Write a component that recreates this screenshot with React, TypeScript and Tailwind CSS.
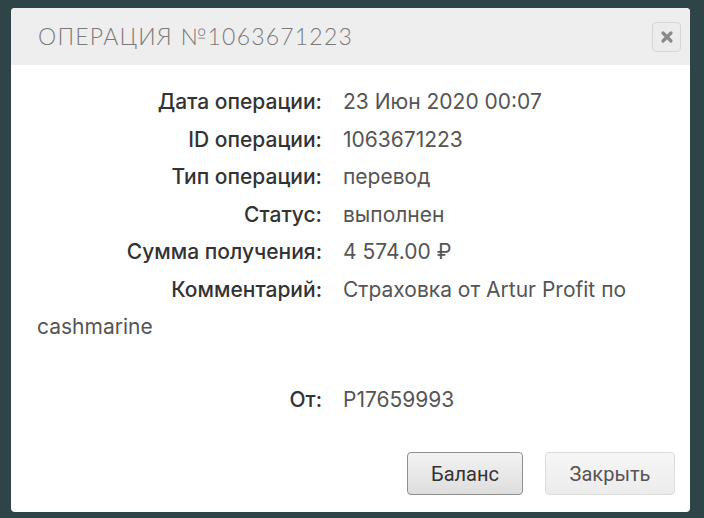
import React from "react";

const rows: [string, string][] = [
  ["Дата операции:", "23 Июн 2020 00:07"],
  ["ID операции:", "1063671223"],
  ["Тип операции:", "перевод"],
  ["Статус:", "выполнен"],
  ["Сумма получения:", "4 574.00 ₽"],
];

function Row({ label, value }: { label: string; value: string }) {
  return (
    <div className="leading-[37.5px]">
      <span className="inline-block w-[285px] text-right mr-[21px] font-medium text-[#333]">{label}</span>
      <span className="text-[#555]">{value}</span>
    </div>
  );
}

export default function App() {
  return (
    <div className="w-[704px] h-[518px] bg-[#2e4447] pt-[8px] pl-[11px] overflow-hidden">
      <div className="w-[679px] h-[504px] bg-white rounded-[4px] flex flex-col overflow-hidden">
        <div className="h-[57px] bg-[#eeeeee] flex items-center justify-between pl-[27px] pr-[9px]">
          <div className="text-[#7a7a7a] text-[23px] font-light tracking-[1.2px] uppercase" style={{ fontFamily: "Lato, sans-serif" }}>
            Операция №1063671223
          </div>
          <div className="w-[29px] h-[30px] rounded-[4px] border border-[#d6d6d6] bg-[#ececec] flex items-center justify-center">
            <svg width="14" height="14" viewBox="0 0 14 14">
              <path d="M3 3 L11 11 M11 3 L3 11" stroke="#8a8a8a" strokeWidth="3.2" strokeLinecap="round" />
            </svg>
          </div>
        </div>
        <div className="flex-1 flex flex-col pt-[18px] pl-[26px] pr-[26px] text-[21px]" style={{ fontFamily: "Inter, sans-serif" }}>
          {rows.map(([l, v]) => (
            <Row key={l} label={l} value={v} />
          ))}
          <div className="leading-[37.5px]">
            <span className="inline-block w-[285px] text-right mr-[21px] font-medium text-[#333]">Комментарий:</span>
            <span className="text-[#555]">Страховка от Artur Profit по cashmarine</span>
          </div>
          <div className="h-[35px]" />
          <Row label="От:" value="P17659993" />
          <div className="mt-auto mb-[17px] flex justify-end gap-[22px] mr-[-11px]" style={{ fontFamily: "Roboto, sans-serif" }}>
            <button className="w-[116px] h-[43px] rounded-[4px] border border-[#8f8f8f] bg-gradient-to-b from-[#f2f2f2] to-[#dedede] text-[20px] text-[#333]">
              Баланс
            </button>
            <button className="w-[130px] h-[43px] rounded-[4px] border border-[#dcdcdc] bg-gradient-to-b from-[#f6f6f6] to-[#ececec] text-[20px] text-[#555]">
              Закрыть
            </button>
          </div>
        </div>
      </div>
    </div>
  );
}
